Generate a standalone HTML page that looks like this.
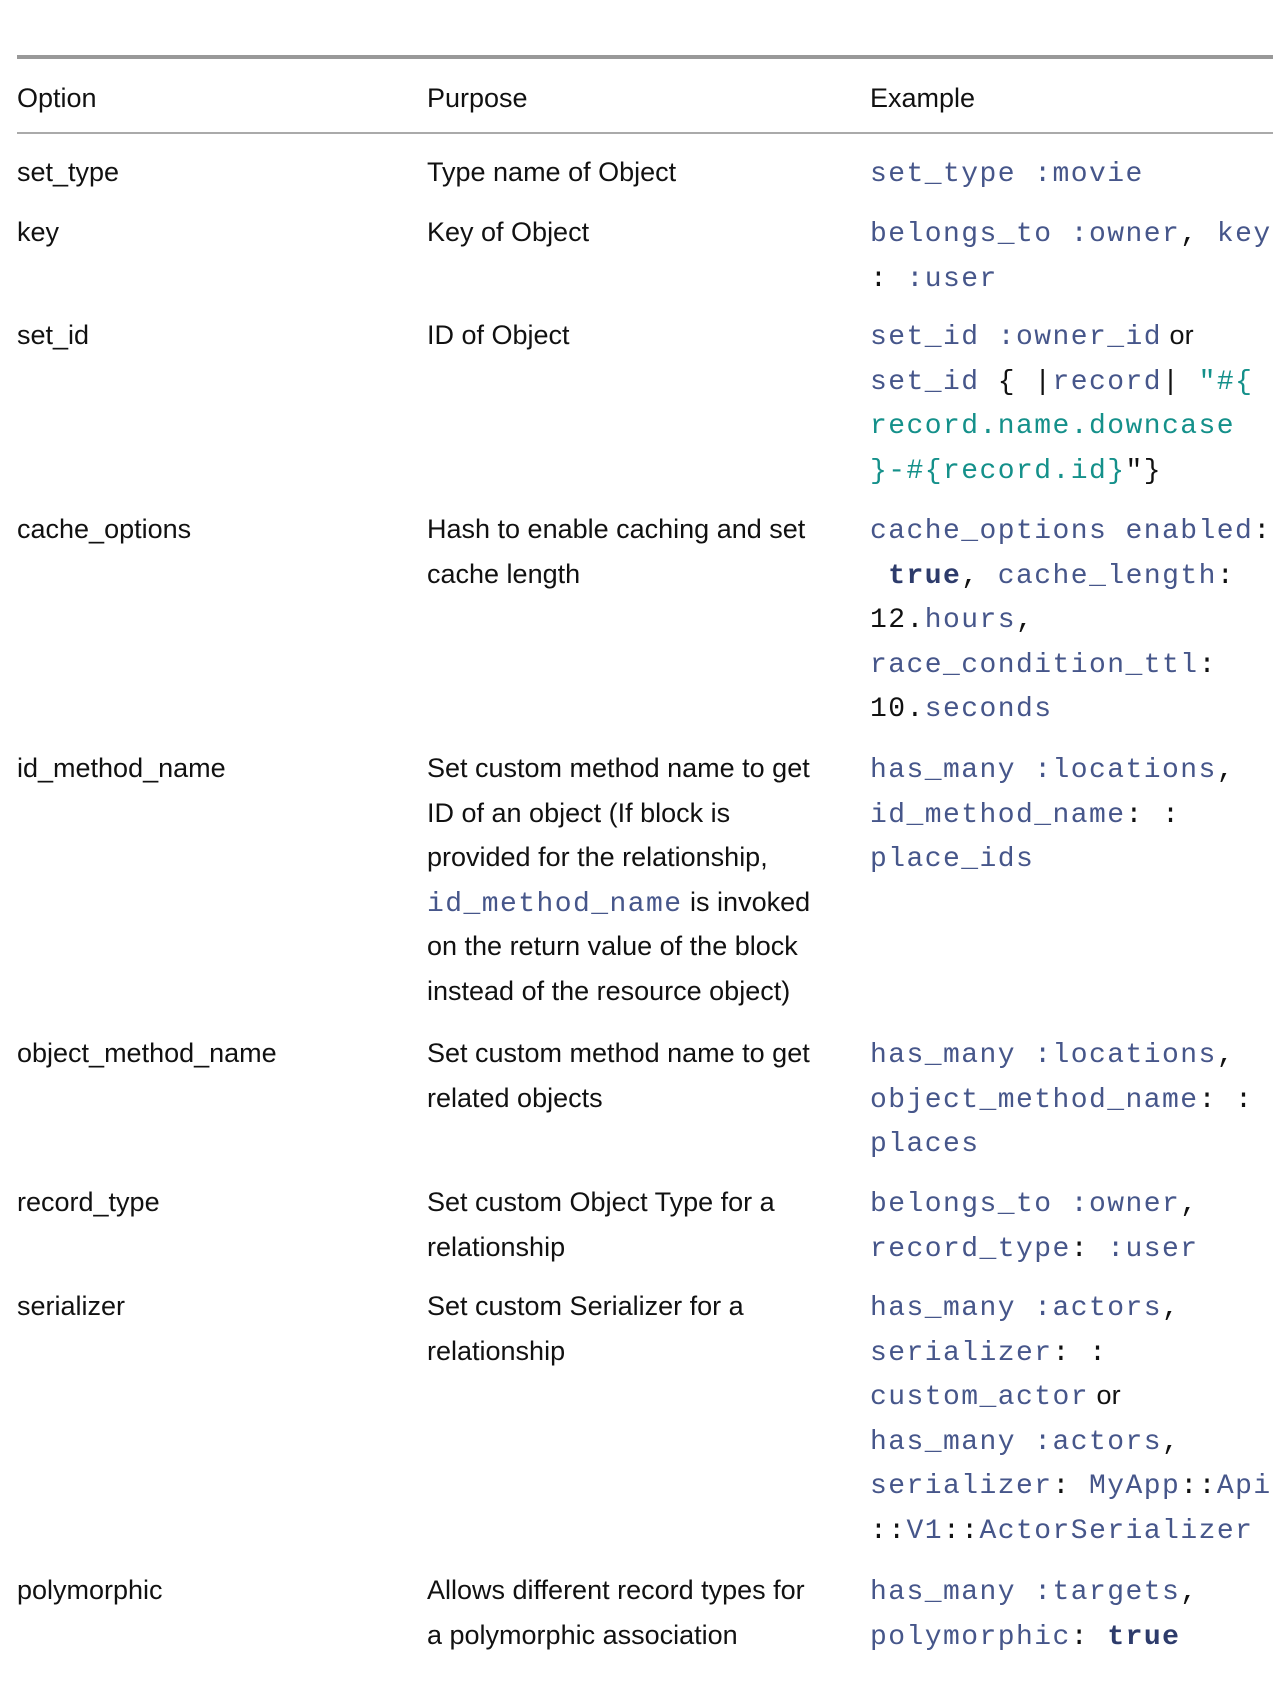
<!DOCTYPE html>
<html><head><meta charset="utf-8"><style>
body{margin:0;width:1273px;height:1692px;background:#fff;position:relative;font-family:"Liberation Sans",sans-serif;font-size:27px;color:#111;overflow:hidden}
.r{position:absolute;left:0;width:1273px}
.c{position:absolute;top:0;line-height:44.5px;white-space:nowrap}
.c1{left:17px}.c2{left:427px}.c3{left:870px}
code{font-family:"Liberation Mono",monospace;font-size:28px;letter-spacing:1.45px;color:#46568a;line-height:1}
.t{color:#14908a}.k{color:#2d3b6b;font-weight:bold}.p{color:#111}
.hr{position:absolute;left:17px;width:1256px;background:#999}
</style></head><body>
<div class="hr" style="top:55px;height:4px"></div>
<div class="hr" style="top:132px;height:2px;background:#aaa"></div>
<div class="r" style="top:76px"><div class="c c1">Option</div><div class="c c2">Purpose</div><div class="c c3">Example</div></div>

<div class="r" style="top:150px"><div class="c c1">set_type</div><div class="c c2">Type name of Object</div><div class="c c3"><code>set_type :movie</code></div></div>

<div class="r" style="top:210px"><div class="c c1">key</div><div class="c c2">Key of Object</div><div class="c c3"><code>belongs_to :owner<span class="p">,</span> key<br><span class="p">:</span> :user</code></div></div>

<div class="r" style="top:313px"><div class="c c1">set_id</div><div class="c c2">ID of Object</div><div class="c c3"><code>set_id :owner_id</code> or<br><code>set_id <span class="p">{ |</span>record<span class="p">|</span> <span class="t">"#{</span><br><span class="t">record.name.downcase</span><br><span class="t">}-#{record.id}</span><span class="p">"}</span></code></div></div>

<div class="r" style="top:507px"><div class="c c1">cache_options</div><div class="c c2">Hash to enable caching and set<br>cache length</div><div class="c c3"><code>cache_options enabled<span class="p">:</span><br>&nbsp;<span class="k">true</span><span class="p">,</span> cache_length<span class="p">:</span><br><span class="p">12.</span>hours<span class="p">,</span><br>race_condition_ttl<span class="p">:</span><br><span class="p">10.</span>seconds</code></div></div>

<div class="r" style="top:746px"><div class="c c1">id_method_name</div><div class="c c2">Set custom method name to get<br>ID of an object (If block is<br>provided for the relationship,<br><code>id_method_name</code> is invoked<br>on the return value of the block<br>instead of the resource object)</div><div class="c c3"><code>has_many :locations<span class="p">,</span><br>id_method_name<span class="p">:</span> <span class="p">:</span><br>place_ids</code></div></div>

<div class="r" style="top:1031px"><div class="c c1">object_method_name</div><div class="c c2">Set custom method name to get<br>related objects</div><div class="c c3"><code>has_many :locations<span class="p">,</span><br>object_method_name<span class="p">:</span> <span class="p">:</span><br>places</code></div></div>

<div class="r" style="top:1180px"><div class="c c1">record_type</div><div class="c c2">Set custom Object Type for a<br>relationship</div><div class="c c3"><code>belongs_to :owner<span class="p">,</span><br>record_type<span class="p">:</span> :user</code></div></div>

<div class="r" style="top:1284px"><div class="c c1">serializer</div><div class="c c2">Set custom Serializer for a<br>relationship</div><div class="c c3"><code>has_many :actors<span class="p">,</span><br>serializer<span class="p">:</span> <span class="p">:</span><br>custom_actor</code> or<br><code>has_many :actors<span class="p">,</span><br>serializer<span class="p">:</span> MyApp<span class="p">::</span>Api<br><span class="p">::</span>V1<span class="p">::</span>ActorSerializer</code></div></div>

<div class="r" style="top:1568px"><div class="c c1">polymorphic</div><div class="c c2">Allows different record types for<br>a polymorphic association</div><div class="c c3"><code>has_many :targets<span class="p">,</span><br>polymorphic<span class="p">:</span> <span class="k">true</span></code></div></div>
</body></html>
